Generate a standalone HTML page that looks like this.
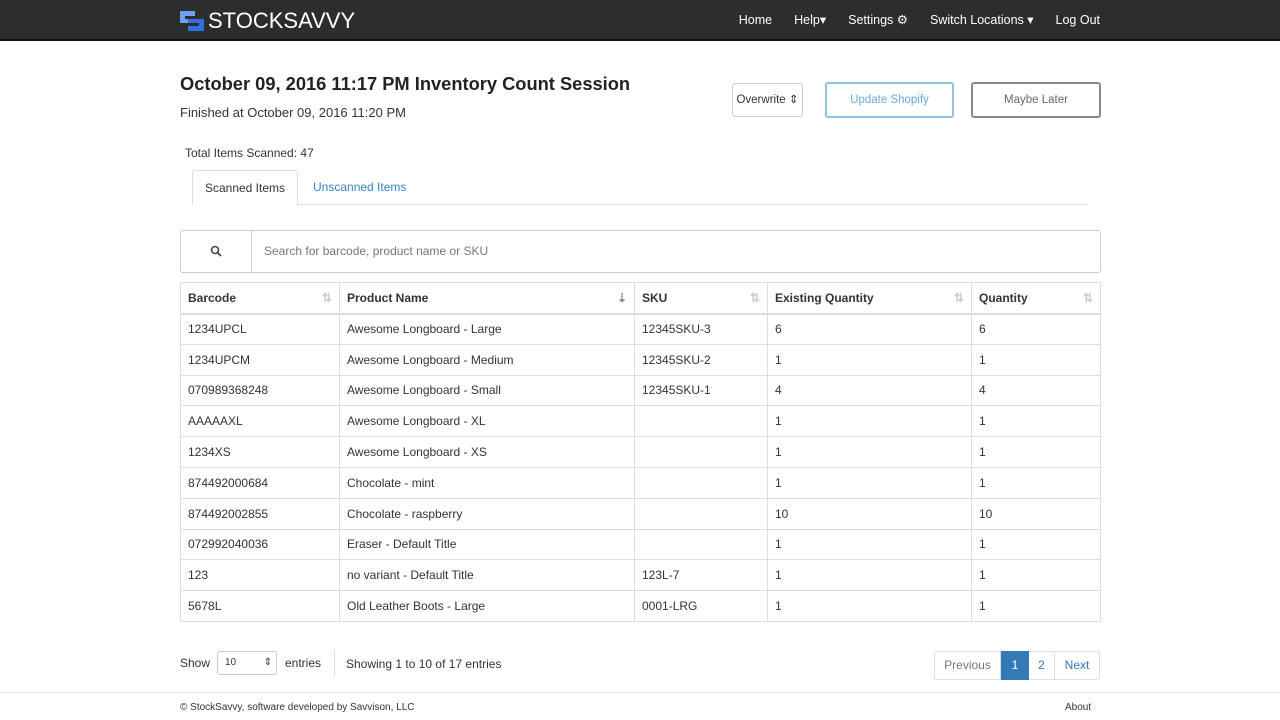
<!DOCTYPE html><html><head><style>
*{box-sizing:border-box}
body{margin:0;width:1280px;height:720px;overflow:hidden;background:#fff;font-family:"Liberation Sans",sans-serif;color:#333;font-size:12.5px}
.nav{height:41px;background:#2b2d2f;border-bottom:2px solid #111;position:relative}
.logo{position:absolute;left:180px;top:8px;color:#fff;font-size:23px;display:flex;align-items:center}
.navr{position:absolute;right:180px;top:12px;color:#fff;font-size:12.5px}
.navr span{margin-left:22px}
.abs{position:absolute}
h1{position:absolute;left:180px;top:73px;margin:0;font-size:18.3px;font-weight:bold;color:#222}
.btn{position:absolute;border-radius:3px;text-align:center;font-size:11.5px}
table{position:absolute;left:180px;top:282px;width:921px;border-collapse:collapse}
td,th{border:1px solid #ddd;padding:0 7px;height:30.8px;text-align:left;font-size:12px}
th{height:31px;border-bottom:2px solid #ddd;position:relative}
th i{position:absolute;right:7px;top:8px;color:#ccc;font-style:normal;font-size:12px}
</style></head><body>
<div class="nav"><div class="logo"><svg width="24" height="20" viewBox="0 0 24 20"><rect x="0" y="0" width="15" height="12" fill="#6fa0f0"/><rect x="8" y="8" width="16" height="12" fill="#2f6fe0"/><rect x="5" y="5" width="11" height="3" fill="#2b2d2f"/><rect x="8" y="12" width="11" height="3" fill="#2b2d2f"/></svg><span style="margin-left:4px;font-size:22px">STOCKSAVVY</span></div>
<div class="navr"><span>Home</span><span>Help▾</span><span>Settings ⚙</span><span>Switch Locations ▾</span><span>Log Out</span></div></div>
<h1>October 09, 2016 11:17 PM Inventory Count Session</h1>
<div class="abs" style="left:180px;top:105px;font-size:13px">Finished at October 09, 2016 11:20 PM</div>
<div class="btn" style="left:732px;top:83px;width:71px;height:34px;border:1px solid #ccc;line-height:32px;color:#333;font-size:11.5px">Overwrite ⇕</div>
<div class="btn" style="left:825px;top:82px;width:129px;height:36px;border:2px solid #8cc2e0;line-height:33px;color:#6aa9d6">Update Shopify</div>
<div class="btn" style="left:971px;top:82px;width:130px;height:36px;border:2px solid #888;line-height:33px;color:#666">Maybe Later</div>
<div class="abs" style="left:185px;top:146px;font-size:12px">Total Items Scanned: 47</div>
<div class="abs" style="left:192px;top:204px;width:896px;border-top:1px solid #ddd"></div>
<div class="abs" style="left:192px;top:170px;width:106px;height:35px;border:1px solid #ddd;border-bottom:1px solid #fff;border-radius:3px 3px 0 0;background:#fff;text-align:center;line-height:34px;font-size:12px">Scanned Items</div>
<div class="abs" style="left:313px;top:180px;color:#3a83c5;font-size:12px">Unscanned Items</div>
<div class="abs" style="left:180px;top:230px;width:921px;height:43px;border:1px solid #ccc;border-radius:3px"></div>
<div class="abs" style="left:251px;top:231px;height:41px;border-left:1px solid #ccc"></div>
<svg class="abs" style="left:210px;top:245px" width="12" height="12" viewBox="0 0 12 12"><circle cx="5" cy="5" r="3.5" fill="none" stroke="#444" stroke-width="1.6"/><line x1="7.5" y1="7.5" x2="11" y2="11" stroke="#444" stroke-width="1.8"/></svg>
<div class="abs" style="left:264px;top:244px;color:#777;font-size:12px">Search for barcode, product name or SKU</div>
<table>
<tr><th style="width:159px">Barcode<i>⇅</i></th><th style="width:295px">Product Name<i style="color:#888">⇣</i></th><th style="width:133px">SKU<i>⇅</i></th><th style="width:204px">Existing Quantity<i>⇅</i></th><th>Quantity<i>⇅</i></th></tr>
<tr><td>1234UPCL</td><td>Awesome Longboard - Large</td><td>12345SKU-3</td><td>6</td><td>6</td></tr>
<tr><td>1234UPCM</td><td>Awesome Longboard - Medium</td><td>12345SKU-2</td><td>1</td><td>1</td></tr>
<tr><td>070989368248</td><td>Awesome Longboard - Small</td><td>12345SKU-1</td><td>4</td><td>4</td></tr>
<tr><td>AAAAAXL</td><td>Awesome Longboard - XL</td><td></td><td>1</td><td>1</td></tr>
<tr><td>1234XS</td><td>Awesome Longboard - XS</td><td></td><td>1</td><td>1</td></tr>
<tr><td>874492000684</td><td>Chocolate - mint</td><td></td><td>1</td><td>1</td></tr>
<tr><td>874492002855</td><td>Chocolate - raspberry</td><td></td><td>10</td><td>10</td></tr>
<tr><td>072992040036</td><td>Eraser - Default Title</td><td></td><td>1</td><td>1</td></tr>
<tr><td>123</td><td>no variant - Default Title</td><td>123L-7</td><td>1</td><td>1</td></tr>
<tr><td>5678L</td><td>Old Leather Boots - Large</td><td>0001-LRG</td><td>1</td><td>1</td></tr>
</table>
<div class="abs" style="left:180px;top:656px;font-size:12px">Show</div>
<div class="abs" style="left:217px;top:651px;width:60px;height:24px;border:1px solid #ccc;border-radius:3px;font-size:10px;line-height:22px;padding-left:7px">10<span style="float:right;margin-right:4px">⇕</span></div>
<div class="abs" style="left:285px;top:656px;font-size:12px">entries</div>
<div class="abs" style="left:334px;top:650px;height:27px;border-left:1px solid #ddd"></div>
<div class="abs" style="left:346px;top:657px;font-size:12px">Showing 1 to 10 of 17 entries</div>
<div class="abs" style="left:934px;top:651px;height:29px;display:flex;font-size:12px;line-height:27px">
<div style="border:1px solid #ddd;width:67px;text-align:center;color:#777;border-radius:3px 0 0 3px">Previous</div>
<div style="background:#337ab7;color:#fff;width:28px;text-align:center;border:1px solid #337ab7">1</div>
<div style="border:1px solid #ddd;border-left:0;width:26px;text-align:center;color:#337ab7">2</div>
<div style="border:1px solid #ddd;border-left:0;width:45px;text-align:center;color:#337ab7;border-radius:0 3px 3px 0">Next</div></div>
<div class="abs" style="left:0;top:692px;width:1280px;border-top:1px solid #e5e5e5"></div>
<div class="abs" style="left:180px;top:702px;font-size:10px">© StockSavvy, software developed by Savvison, LLC</div>
<div class="abs" style="left:1065px;top:702px;font-size:10px">About</div>
</body></html>
